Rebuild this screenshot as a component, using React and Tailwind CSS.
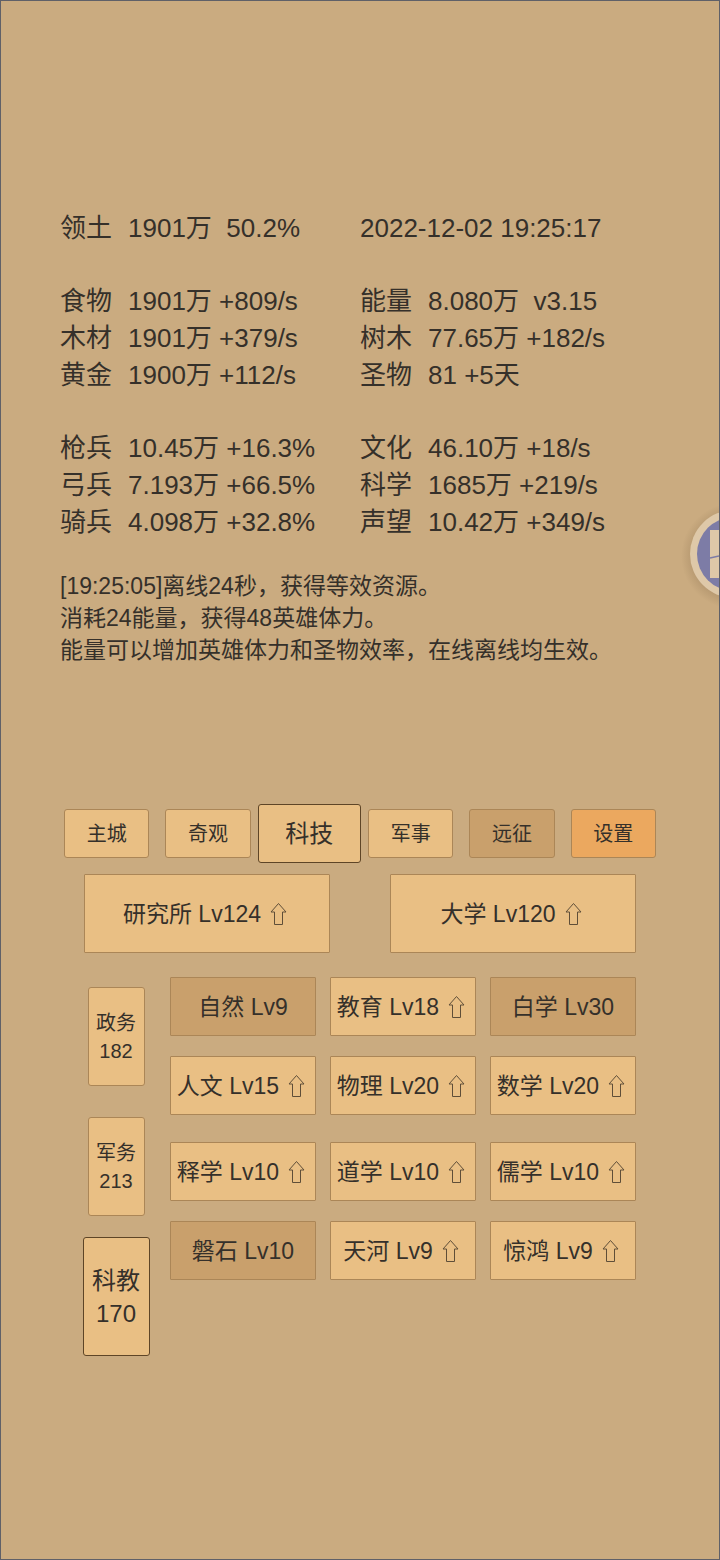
const leftStats = [
  [['领土', '1901万  50.2%']],
  [['食物', '1901万 +809/s'], ['木材', '1901万 +379/s'], ['黄金', '1900万 +112/s']],
  [['枪兵', '10.45万 +16.3%'], ['弓兵', '7.193万 +66.5%'], ['骑兵', '4.098万 +32.8%']],
];

const rightStats = [
  [[null, '2022-12-02 19:25:17']],
  [['能量', '8.080万  v3.15'], ['树木', '77.65万 +182/s'], ['圣物', '81 +5天']],
  [['文化', '46.10万 +18/s'], ['科学', '1685万 +219/s'], ['声望', '10.42万 +349/s']],
];

const log = [
  '[19:25:05]离线24秒，获得等效资源。',
  '消耗24能量，获得48英雄体力。',
  '能量可以增加英雄体力和圣物效率，在线离线均生效。',
];

const tabs = [
  { name: '主城' },
  { name: '奇观' },
  { name: '科技', active: true },
  { name: '军事' },
  { name: '远征', tone: 'dim' },
  { name: '设置', tone: 'accent' },
];

const buildings = [
  { name: '研究所', level: 124, up: true },
  { name: '大学', level: 120, up: true },
];

const sections = [
  { name: '政务', value: 182 },
  { name: '军务', value: 213 },
  { name: '科教', value: 170, active: true },
];

const techGroups = [
  [
    { name: '自然', level: 9 },
    { name: '教育', level: 18, up: true },
    { name: '白学', level: 30 },
    { name: '人文', level: 15, up: true },
    { name: '物理', level: 20, up: true },
    { name: '数学', level: 20, up: true },
  ],
  [
    { name: '释学', level: 10, up: true },
    { name: '道学', level: 10, up: true },
    { name: '儒学', level: 10, up: true },
    { name: '磐石', level: 10 },
    { name: '天河', level: 9, up: true },
    { name: '惊鸿', level: 9, up: true },
  ],
];

const tones = {
  normal: 'bg-[#e9bf84]',
  dim: 'bg-[#c9a06c]',
  accent: 'bg-[#eba85f]',
};

function UpArrow() {
  return (
    <svg width="24" height="24" viewBox="0 0 24 24" fill="none" stroke="#5f4e38" strokeWidth="1" role="img" aria-label="可升级">
      <path d="M11.5 1.5 L19 10 H15.5 V22.5 H7.5 V10 H4 Z" />
    </svg>
  );
}

function StatColumn({ groups }) {
  return (
    <div className="flex flex-col gap-9">
      {groups.map((rows, i) => (
        <dl key={i}>
          {rows.map(([label, value]) => (
            <div key={value} className="flex h-[37px] items-center">
              {label && <dt className="w-[68px] shrink-0">{label}</dt>}
              <dd className="whitespace-pre">{value}</dd>
            </div>
          ))}
        </dl>
      ))}
    </div>
  );
}

function LevelButton({ item, size }) {
  return (
    <button
      type="button"
      className={`flex items-center justify-center whitespace-nowrap rounded-[1px] border border-[#ab8657] text-[23px] leading-8 ${size} ${item.up ? tones.normal : tones.dim}`}
    >
      <span>{item.name} Lv{item.level}</span>
      {item.up && <span className="ml-1.5"><UpArrow /></span>}
    </button>
  );
}

function FloatingButton() {
  return (
    <button type="button" aria-label="悬浮菜单" className="absolute right-0 top-[500px]">
      <svg width="38" height="108" viewBox="0 0 38 108">
        <defs>
          <radialGradient id="halo">
            <stop offset="0.8" stopColor="#6b5234" stopOpacity="0.18" />
            <stop offset="1" stopColor="#6b5234" stopOpacity="0" />
          </radialGradient>
        </defs>
        <circle cx="53" cy="55" r="53" fill="url(#halo)" />
        <circle cx="53" cy="53" r="44" fill="#dec8a8" />
        <circle cx="53" cy="53" r="37" fill="#7d7ca6" />
        <rect x="29" y="29" width="24" height="48" fill="#dec8a8" />
        <path d="M29 57 L38 55" stroke="#7d7ca6" strokeWidth="1.5" />
      </svg>
    </button>
  );
}

export default function App() {
  return (
    <div className="relative min-h-screen overflow-hidden border border-[#5f6068] bg-[#caab80] pt-[209px] pb-[202px] font-['Liberation_Sans','Noto_Sans_CJK_SC',sans-serif] text-[#35302a]">
      <section className="mx-[59px] grid grid-cols-2 text-[26px] leading-[37px]">
        <StatColumn groups={leftStats} />
        <StatColumn groups={rightStats} />
      </section>

      <section className="mx-[59px] mt-[29px] h-[234px] text-[23px] leading-8">
        {log.map((line) => (
          <p key={line}>{line}</p>
        ))}
      </section>

      <nav className="mx-[55px] grid grid-cols-6 items-center">
        {tabs.map((tab) => (
          <button
            key={tab.name}
            type="button"
            className={`rounded-[3px] border ${tones[tab.tone || 'normal']} ${
              tab.active
                ? '-mx-px h-[59px] border-[#5e4527] text-2xl'
                : 'mx-2 h-[49px] border-[#ab8657] text-xl'
            }`}
          >
            {tab.name}
          </button>
        ))}
      </nav>

      <main className="mx-[83px] mt-[11px]">
        <div className="grid grid-cols-2 gap-[60px]">
          {buildings.map((item) => (
            <LevelButton key={item.name} item={item} size="h-[79px]" />
          ))}
        </div>

        <div className="mt-6 flex gap-[22px]">
          <nav className="flex w-16 shrink-0 flex-col items-center pt-2.5">
            {sections.map((section) => (
              <button
                key={section.name}
                type="button"
                className={`flex flex-col items-center justify-center rounded-[3px] border bg-[#e9bf84] ${
                  section.active
                    ? '-mt-2.5 h-[119px] w-[67px] border-[#5e4527] text-2xl leading-[33px]'
                    : 'mb-[31px] h-[99px] w-[57px] border-[#ab8657] text-xl leading-7'
                }`}
              >
                <span>{section.name}</span>
                <span>{section.value}</span>
              </button>
            ))}
          </nav>

          <div className="flex grow flex-col gap-[27px]">
            {techGroups.map((group, i) => (
              <div key={i} className="grid grid-cols-3 gap-x-3.5 gap-y-5">
                {group.map((item) => (
                  <LevelButton key={item.name} item={item} size="h-[59px]" />
                ))}
              </div>
            ))}
          </div>
        </div>
      </main>

      <FloatingButton />
    </div>
  );
}
